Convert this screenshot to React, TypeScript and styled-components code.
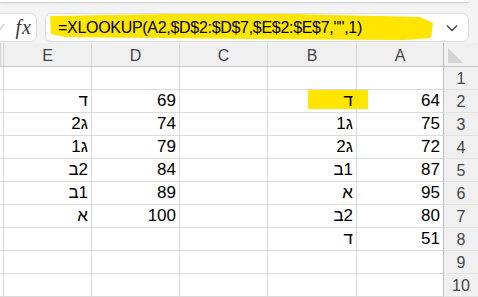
import styled, { createGlobalStyle } from "styled-components";

const GlobalStyle = createGlobalStyle`
  html, body {
    margin: 0;
    padding: 0;
    background: #f3f3f3;
    font-family: "Liberation Sans", Arial, sans-serif;
  }
`;

const Page = styled.div`
  width: 478px;
  height: 297px;
  overflow: hidden;
  display: flex;
  flex-direction: column;
  background: #f3f3f3;
`;

const Ribbon = styled.div`
  height: 3px;
  margin-right: 9px;
  background: #fff;
  border-bottom-right-radius: 8px;
  box-shadow: 0 1px 2px rgba(0, 0, 0, 0.18);
`;

const FormulaBar = styled.div`
  height: 47px;
  box-sizing: border-box;
  padding: 11px 9px 0 0;
  display: flex;
  align-items: flex-start;
  gap: 8px;
`;

const FxBox = styled.div`
  margin-left: -30px;
  width: 67px;
  height: 29px;
  box-sizing: border-box;
  border: 1px solid #dcdcdc;
  border-radius: 6px;
  background: #fff;
  display: flex;
  align-items: center;
  justify-content: flex-end;
  gap: 9px;
  padding-right: 4px;
`;

const CheckMark = styled.span`
  font-size: 13px;
  color: #c4c4c4;
`;

const FxLabel = styled.span`
  font-family: "Liberation Serif", "Times New Roman", serif;
  font-style: italic;
  font-size: 20px;
  color: #3a3a3a;
  letter-spacing: 1px;
`;

const FormulaBox = styled.div`
  position: relative;
  flex: 1;
  height: 29px;
  box-sizing: border-box;
  border: 1px solid #dcdcdc;
  border-radius: 6px;
  background: #fff;
  display: flex;
  align-items: center;
  padding: 0 10px 0 12px;
`;

const Marker = styled.svg`
  position: absolute;
  left: -1px;
  top: -1px;
  overflow: visible;
`;

const FormulaText = styled.span`
  position: relative;
  flex: 1;
  font-size: 16px;
  letter-spacing: -0.3px;
  color: #000;
  white-space: nowrap;
`;

const Sheet = styled.div`
  direction: rtl;
  display: grid;
  grid-template-columns: 35px 87px 89px 88px 88px 88px 3px;
  grid-template-rows: 24px;
  grid-auto-rows: 23px;
  background: #fff;
`;

const Corner = styled.div`
  direction: ltr;
  background: #f0f0f0;
  border-left: 1px solid #bcbcbc;
  border-bottom: 1px solid #c6c6c6;
  box-sizing: border-box;
  padding: 5px 0 0 4px;
`;

const ColHeader = styled.div`
  background: #f0f0f0;
  border-left: 1px solid #d6d6d6;
  border-bottom: 1px solid #c6c6c6;
  box-sizing: border-box;
  padding-top: 2px;
  text-align: center;
  font-size: 16px;
  line-height: 21px;
  color: #454545;
`;

const RowHeader = styled.div`
  background: #f0f0f0;
  border-left: 1px solid #bcbcbc;
  border-bottom: 1px solid #e2e2e2;
  box-sizing: border-box;
  padding-top: 2px;
  text-align: center;
  font-size: 16px;
  line-height: 20px;
  color: #454545;
`;

const Cell = styled.div<{ $mark?: boolean }>`
  position: ${(p) => (p.$mark ? "relative" : "static")};
  border-left: 1px solid #dadada;
  border-bottom: 1px solid #dadada;
  box-sizing: border-box;
  padding: 0 3px;
  text-align: right;
  font-size: 17px;
  line-height: 22px;
  color: #000;
  white-space: nowrap;
`;

const CellMark = styled.span`
  position: absolute;
  top: 0;
  right: -12px;
  width: 60px;
  height: 19px;
  background: #ffe500;
  z-index: 1;
`;

// text shown exactly in the order it is written, left to right
const CellText = styled.span`
  position: relative;
  z-index: 2;
  direction: ltr;
  unicode-bidi: bidi-override;
`;

const columns = ["A", "B", "C", "D", "E"];

const DALET = "ד";
const GIMEL = "ג";
const BET = "ב";
const ALEF = "א";

const rows: string[][] = [
  ["", "", "", "", ""],
  ["64", DALET, "", "69", DALET],
  ["75", "1" + GIMEL, "", "74", "2" + GIMEL],
  ["72", "2" + GIMEL, "", "79", "1" + GIMEL],
  ["87", BET + "1", "", "84", BET + "2"],
  ["95", ALEF, "", "89", BET + "1"],
  ["80", BET + "2", "", "100", ALEF],
  ["51", DALET, "", "", ""],
  ["", "", "", "", ""],
  ["", "", "", "", ""],
];

export default function App() {
  return (
    <Page>
      <GlobalStyle />
      <Ribbon />
      <FormulaBar>
        <FxBox>
          <CheckMark>✓</CheckMark>
          <FxLabel>fx</FxLabel>
        </FxBox>
        <FormulaBox>
          <Marker width="400" height="30">
            <path
              d="M5 3 L120 1 L250 1 L375 4 L388 10 L386 25 L360 27 L200 26 L20 24 L6 21 Z"
              fill="#ffe500"
            />
          </Marker>
          <FormulaText>=XLOOKUP(A2,$D$2:$D$7,$E$2:$E$7,"",1)</FormulaText>
          <svg width="12" height="8" viewBox="0 0 12 8">
            <polyline
              points="1,1.5 6,6.5 11,1.5"
              fill="none"
              stroke="#3a3a3a"
              strokeWidth="1.3"
            />
          </svg>
        </FormulaBox>
      </FormulaBar>
      <Sheet>
        <Corner>
          <svg width="15" height="15" viewBox="0 0 15 15">
            <polygon points="0,0 0,15 15,15" fill="#d3d3d3" />
          </svg>
        </Corner>
        {columns.map((c) => (
          <ColHeader key={c}>{c}</ColHeader>
        ))}
        <ColHeader />
        {rows.map((r, i) => (
          <Row key={i} index={i + 1} values={r} />
        ))}
      </Sheet>
    </Page>
  );
}

function Row({ index, values }: { index: number; values: string[] }) {
  return (
    <>
      <RowHeader>{index}</RowHeader>
      {values.map((v, j) => {
        const marked = index === 2 && j === 1;
        return (
          <Cell key={j} $mark={marked}>
            {marked && <CellMark />}
            <CellText>{v}</CellText>
          </Cell>
        );
      })}
      <Cell />
    </>
  );
}
